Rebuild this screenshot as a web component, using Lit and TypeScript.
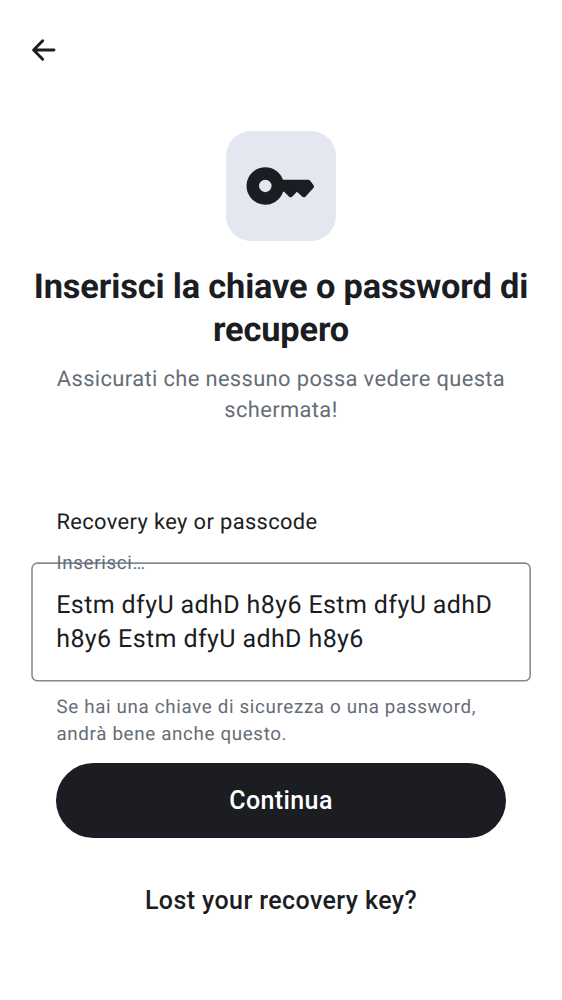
import { LitElement, html, css } from "lit";
import { customElement } from "lit/decorators.js";

@customElement("app-root")
export class AppRoot extends LitElement {
  static styles = css`
    :host { display: block; height: 1000px; background: #fff; color: #1b1d22; font-family: Roboto, sans-serif; overflow: hidden; text-rendering: geometricPrecision; }
    * { box-sizing: border-box; }
    .screen { display: flex; flex-direction: column; height: 1000px; padding: 0 31px; }
    .bar { height: 100px; display: flex; align-items: center; flex: none; }
    .back { border: 0; background: none; padding: 0; width: 26px; height: 26px; color: inherit; }
    svg { display: block; }
    .tile { width: 110px; height: 110px; border-radius: 25px; background: #e3e8f0; margin: 31px auto 0; flex: none; }
    h1 { margin: 25px -10px 0; font-size: 34.375px; line-height: 42.5px; font-weight: 700; letter-spacing: -0.15px; text-align: center; white-space: nowrap; }
    .sub { margin: 13px 0 0; font-size: 21.875px; line-height: 31px; letter-spacing: 0.38px; color: #656d77; text-align: center; }
    .label { margin-top: 82px; padding-left: 25.5px; font-size: 21.875px; line-height: 30px; letter-spacing: 0.37px; }
    .field { position: relative; margin: 24px 0 0; height: 119px; padding: 27px 25.25px 0; font-size: 25px; line-height: 34.4px; letter-spacing: 0.39px; white-space: nowrap; flex: none; }
    .outline { position: absolute; inset: 0; width: 500px; height: 120px; }
    .hint { position: absolute; left: 25.5px; top: -12px; font-size: 18.75px; line-height: 26px; letter-spacing: 0.66px; color: #656d77; }
    .help { margin: 13px 0 0; padding-left: 25.5px; font-size: 18.75px; line-height: 27px; letter-spacing: 0.66px; color: #656d77; white-space: nowrap; }
    .primary { margin: 15px 25px 0; height: 75px; border: 0; padding: 1px 0 0; border-radius: 38px; background: #1b1d22; color: #fff; flex: none; }
    button { font: 500 25px/34px Roboto, sans-serif; letter-spacing: 0.4px; }
    .link { margin: 45.5px auto 0; padding: 0; border: 0; background: none; color: #1b1d22; }
  `;
  render() {
    return html`<main class="screen">
      <nav class="bar"><button class="back" aria-label="Indietro"><svg width="26" height="26" viewBox="0 0 26 26" fill="none" stroke="currentColor" stroke-width="2.9" stroke-linecap="round" stroke-linejoin="round"><path d="M11.700 3.800 2.600 13l9.100 9.200M2.800 13H23"/></svg></button></nav>
      <div class="tile"><svg width="110" height="110" viewBox="0 0 110 110"><path fill="#1b1d22" fill-rule="evenodd" d="M39.300 36.200a18.750 18.750 0 1 0 17.800 24.600h1l5 4.900q1.500 1.300 3 0l4.800-4.900 5.500 4.900q1.500 1.200 3 0l8-8.800q1.200-1.500 0-3L84 49.500q-.8-.8-2-.8H57A18.750 18.750 0 0 0 39.300 36.200Zm0 12.500a6.250 6.250 0 1 1 0 12.500a6.250 6.250 0 0 1 0-12.500Z"/></svg></div>
      <h1>Inserisci la chiave o password di<br>recupero</h1>
      <p class="sub">Assicurati che nessuno possa vedere questa<br>schermata!</p>
      <div class="label">Recovery key or passcode</div>
      <div class="field"><svg class="outline" viewBox="0 0 500 120"><rect x="1" y="1.100" width="498.200" height="117.700" rx="5.500" fill="none" stroke="#818a95" stroke-width="1.560"/></svg><span class="hint">Inserisci…</span>Estm dfyU adhD h8y6 Estm dfyU adhD<br>h8y6 Estm dfyU adhD h8y6</div>
      <p class="help">Se hai una chiave di sicurezza o una password,<br>andrà bene anche questo.</p>
      <button class="primary">Continua</button>
      <button class="link">Lost your recovery key?</button>
    </main>`;
  }
}
